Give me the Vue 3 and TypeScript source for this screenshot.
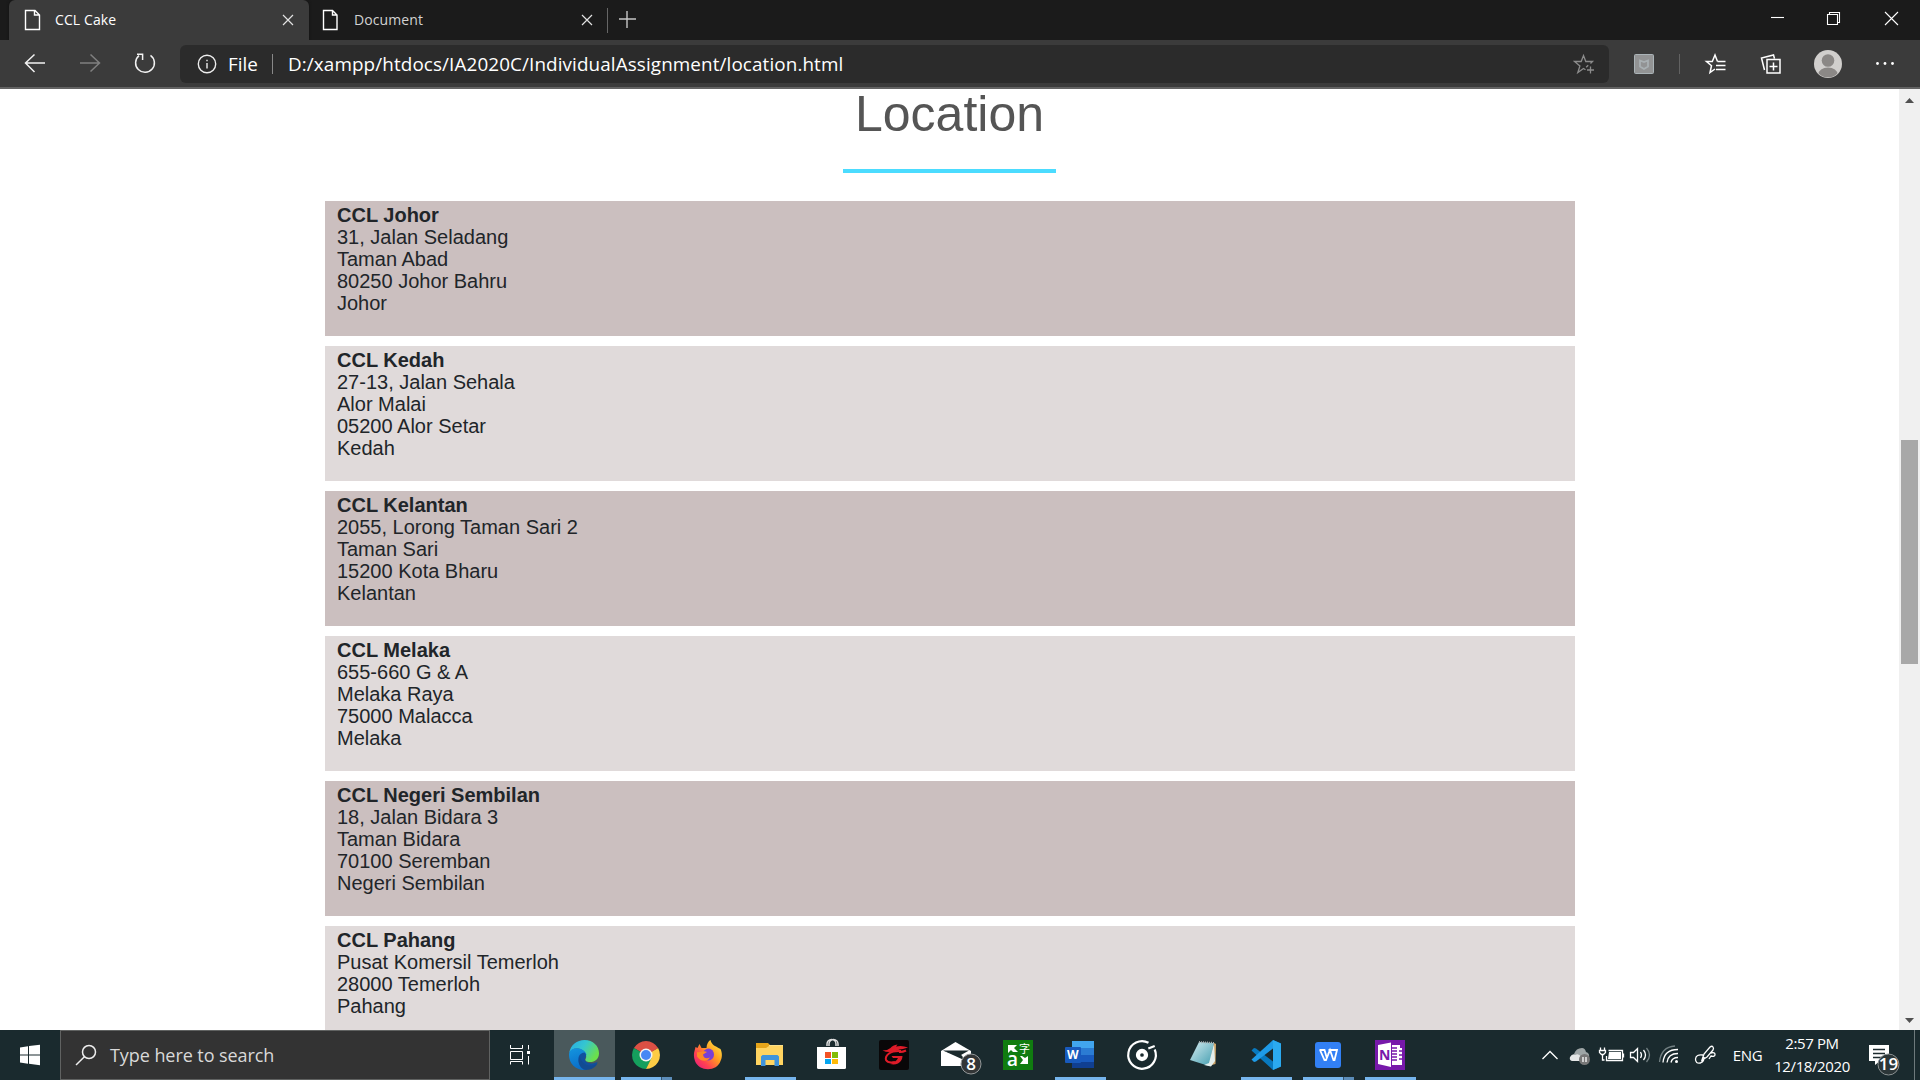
<script setup lang="ts">
interface Branch {
  name: string
  lines: string[]
}

interface TaskApp {
  id: string
  state?: 'active' | 'open' | 'multi'
}

const branches: Branch[] = [
  { name: 'CCL Johor', lines: ['31, Jalan Seladang', 'Taman Abad', '80250 Johor Bahru', 'Johor'] },
  { name: 'CCL Kedah', lines: ['27-13, Jalan Sehala', 'Alor Malai', '05200 Alor Setar', 'Kedah'] },
  { name: 'CCL Kelantan', lines: ['2055, Lorong Taman Sari 2', 'Taman Sari', '15200 Kota Bharu', 'Kelantan'] },
  { name: 'CCL Melaka', lines: ['655-660 G & A', 'Melaka Raya', '75000 Malacca', 'Melaka'] },
  { name: 'CCL Negeri Sembilan', lines: ['18, Jalan Bidara 3', 'Taman Bidara', '70100 Seremban', 'Negeri Sembilan'] },
  { name: 'CCL Pahang', lines: ['Pusat Komersil Temerloh', '28000 Temerloh', 'Pahang'] },
]

const apps: TaskApp[] = [
  { id: 'edge', state: 'active' },
  { id: 'chrome', state: 'multi' },
  { id: 'firefox' },
  { id: 'explorer', state: 'open' },
  { id: 'store' },
  { id: 'garena' },
  { id: 'mail' },
  { id: 'translator' },
  { id: 'word', state: 'open' },
  { id: 'groove' },
  { id: 'notepad' },
  { id: 'vscode', state: 'open' },
  { id: 'wps', state: 'multi' },
  { id: 'onenote', state: 'open' },
]
</script>

<template>
  <div class="screen">
    <header class="tabstrip">
      <div class="tab active">
        <svg class="page-icon" width="18" height="22" viewBox="0 0 18 22"><path d="M2.500 1.500h9.500l4.500 4.500v14.500h-14zM11.500 1.500v4.500h4.500" /></svg>
        <span class="tab-title t1">CCL Cake</span>
        <svg class="x" width="12" height="12" viewBox="0 0 12 12"><path d="M1 1l10 10M11 1L1 11" /></svg>
      </div>
      <div class="tab second">
        <svg class="page-icon" width="18" height="22" viewBox="0 0 18 22"><path d="M1.500 1.500h9l4.500 4.500v14.500h-13.500zM10.500 1.500v4.500h4.500" /></svg>
        <span class="tab-title t2">Document</span>
        <svg class="x" width="12" height="12" viewBox="0 0 12 12"><path d="M1 1l10 10M11 1L1 11" /></svg>
      </div>
      <i class="tab-sep"></i>
      <svg class="plus" width="17" height="17" viewBox="0 0 17 17"><path d="M8 0v17M0 8h17" /></svg>
      <div class="win-controls">
        <svg width="58" height="40" viewBox="0 0 58 40"><path d="M24 17.500h13" /></svg>
        <svg width="58" height="40" viewBox="0 0 58 40"><path d="M22.500 14.500h10v10h-10zM24.500 14.500v-2h10v10h-2" /></svg>
        <svg width="57" height="40" viewBox="0 0 57 40"><path d="M22 12l13 13M35 12L22 25" /></svg>
      </div>
    </header>

    <div class="toolbar">
      <svg class="nav" width="180" height="47" viewBox="0 0 180 47">
        <path d="M45 23H26M34.500 14.500L25.500 23l9 9" />
        <path class="dim" d="M80 23h19M90.500 14.500l9 8.500l-9 8.500" />
        <path d="M139 15.700A9.400 9.400 0 1 0 150.500 15.300M142.600 20V14.200H137" />
      </svg>
      <div class="address">
        <svg class="info" width="20" height="20" viewBox="0 0 20 20"><circle cx="10" cy="10" r="8.700" /><path d="M10 9v5.500M10 5.700v1.500" /></svg>
        <span class="scheme">File</span>
        <i class="addr-sep"></i>
        <span class="url">D:/xampp/htdocs/IA2020C/IndividualAssignment/location.html</span>
        <svg class="fav" width="22" height="22" viewBox="0 0 22 22"><path d="M17.500 10.500L19.500 8.500H12.800L10.500 2.500L8.200 8.500H1.500l5.400 4.500L4.800 19.500l5.700-4l2 1.200M13.200 14.200l2-2M17.500 13.500v7M14 17h7" /></svg>
      </div>
      <svg class="tools" width="311" height="47" viewBox="0 0 311 47">
        <rect x="25.500" y="14.500" width="19" height="19" rx="1" fill="#929394" stroke="#aab3b7" />
        <path d="M31 20.500l4 1.500l4-1.500v6l-4 2.500l-4-2.500z" fill="none" stroke="#a9b0b3" stroke-width="1.800" />
        <path d="M70.500 14v20" stroke="#626262" />
        <g class="line">
          <path d="M108.500 21.500L106 15l-2.700 6.500H97.500l5 4.200L101 32.500l5-3.500M108.500 21.500h8M107 25.500h9.500M107 29.500h9.500" />
          <path d="M158 19.500h13v13.500h-13zM164.500 22.500v8M160.500 26.500h8M155.500 30L152.500 18l12-3l1 3.500" />
        </g>
        <circle cx="219" cy="24" r="14" fill="#d1cfcd" />
        <clipPath id="avatarClip"><circle cx="219" cy="24" r="13.300" /></clipPath>
        <circle cx="219" cy="20.500" r="6.300" fill="#8b8886" />
        <ellipse cx="219" cy="34.500" rx="9.700" ry="7" fill="#8b8886" clip-path="url(#avatarClip)" />
        <g fill="#fff"><circle cx="268.500" cy="23.500" r="1.400" /><circle cx="276" cy="23.500" r="1.400" /><circle cx="283.500" cy="23.500" r="1.400" /></g>
      </svg>
    </div>

    <main class="viewport">
      <div class="page">
        <h1>Location</h1>
        <hr />
        <section class="branches">
          <article v-for="branch in branches" :key="branch.name" class="branch">
            <strong>{{ branch.name }}</strong>
            <span v-for="line in branch.lines" :key="line">{{ line }}</span>
          </article>
        </section>
      </div>
      <aside class="scrollbar">
        <svg width="21" height="21" viewBox="0 0 21 21"><path d="M6 14l4.500-5l4.500 5z" /></svg>
        <div class="track"><div class="thumb"></div></div>
        <svg width="21" height="21" viewBox="0 0 21 21"><path d="M6 9l4.500 5l4.500-5z" /></svg>
      </aside>
    </main>

    <footer class="taskbar">
      <svg class="start" width="60" height="50" viewBox="0 0 60 50"><path d="M20 17.500l8-1.200v8.200h-8zM29 16.100l11-1.300v9.700H29zM20 25.500h8v8.200l-8-1.200zM29 25.500h11v9.700l-11-1.400z" fill="#fff" /></svg>
      <div class="search">
        <svg width="22" height="22" viewBox="0 0 22 22"><circle cx="14" cy="8" r="6.500" /><path d="M9.400 12.800L1 21" /></svg>
        <span class="search-text">Type here to search</span>
      </div>
      <svg class="taskview" width="63" height="50" viewBox="0 0 63 50"><path d="M20.500 15v3.500h12V15M20.500 21.500h12v8h-12zM20.500 34.500v-3h12v3M38.500 15v4.500M38.500 26v8.500" fill="none" stroke="#fff" /><path d="M37 21h3v3h-3z" fill="#fff" /></svg>

      <div class="apps">
        <div v-for="app in apps" :key="app.id" class="app" :class="app.state">
          <svg width="46" height="40" viewBox="0 0 46 40">
            <template v-if="app.id === 'edge'">
              <defs>
                <linearGradient id="edgeTop" x1="0" y1="0" x2="1" y2=".5"><stop offset="0" stop-color="#27a9e5" /><stop offset=".5" stop-color="#35c6d0" /><stop offset="1" stop-color="#6be04b" /></linearGradient>
                <linearGradient id="edgeSide" x1="0" y1="0" x2=".3" y2="1"><stop offset="0" stop-color="#1495df" /><stop offset="1" stop-color="#0b6fc9" /></linearGradient>
              </defs>
              <path d="M8.200 18C9.500 10 16 5 23.500 5C32 5 38 11 38 18.200C38 24 34 27 29 27C25.500 27 23.800 25.700 24.500 24.300C27 20 23 14.500 17 13.500C13 13 9.500 15 8.200 18z" fill="url(#edgeTop)" />
              <path d="M8 20C8 15 12 12.800 16.500 13.200C21.500 13.700 25 16.500 25.500 20C21 18 18.500 22 19 26C19.600 30.500 23 34 27 34.500C17 37 8 30 8 20z" fill="url(#edgeSide)" />
              <path d="M23.500 17.500C17 18 16 25 19 29.500C22.500 34.500 30 35.500 36 28.500C37 27 36 27 35 27.500C29 30 24.500 27 24 25C23.500 22 27 21 23.500 17.500z" fill="#104f9e" />
              <path d="M19 22C16 26 18 32 23 34.800C29 35.500 34 33 36.500 28.500C29 33 21 30 19 22z" fill="#124b92" />
            </template>
            <template v-else-if="app.id === 'chrome'">
              <path d="M23 20L10.900 13A14 14 0 0 1 35.100 13z" fill="#dc5044" />
              <path d="M23 20L10.900 13A14 14 0 0 0 23 34L29 23z" fill="#159f5d" />
              <path d="M23 20L35.100 13A14 14 0 0 1 23 34L28.500 23z" fill="#fdcc45" />
              <path d="M23 13h12.100L28 17z" fill="#dc5044" />
              <circle cx="23" cy="20" r="6.500" fill="#f3f3f3" /><circle cx="23" cy="20" r="5" fill="#4688f4" />
            </template>
            <template v-else-if="app.id === 'firefox'">
              <defs><linearGradient id="fox" x1="1" y1="0" x2="0" y2="1"><stop offset="0" stop-color="#fff44f" /><stop offset=".4" stop-color="#ff9f20" /><stop offset=".7" stop-color="#ff4052" /><stop offset="1" stop-color="#e31587" /></linearGradient></defs>
              <path d="M9.500 16l1-4l2 1l2-4l2 4h5c0-4 2-7 4-8c1 5 5 6 8 8l2 1c2 4 1.700 9 0 12C32 37 14 37 10 26C8.500 22 8.800 18 9.500 16z" fill="url(#fox)" />
              <ellipse cx="23.500" cy="19.500" rx="5.500" ry="6" fill="#7940d5" />
              <path d="M12 17c3 1 6-2 10 0l-4 2.500c0 3 3 5 7 3c-3 5-10 4-13-1z" fill="#ff8a25" />
            </template>
            <template v-else-if="app.id === 'explorer'">
              <path d="M9 8h12l2 2h13v20H9z" fill="#e6a51a" /><path d="M22 10h14v3H22z" fill="#fbe089" /><path d="M9 13h10l3-2h14v19H9z" fill="#ffd461" />
              <path d="M14 31V21.500l1.500-1.500h15l1.500 1.500V31h-4.500v-6h-9v6z" fill="#3f94dc" />
            </template>
            <template v-else-if="app.id === 'store'">
              <path d="M18 11V9a4.500 4.500 0 0 1 9 0v2M20 11V9a4.500 4.500 0 0 1 9 0v2" fill="none" stroke="#dedede" stroke-width="1.500" />
              <path d="M8 12h29v20.500q0 1.500-1.500 1.500h-26Q8 34 8 32.500z" fill="#fff" />
              <path d="M16 17h6v6h-6z" fill="#f35325" /><path d="M23 17h6v6h-6z" fill="#81bc06" /><path d="M16 24h6v5h-6z" fill="#05a6f0" /><path d="M23 24h6v5h-6z" fill="#ffba08" />
            </template>
            <template v-else-if="app.id === 'garena'">
              <rect x="8" y="5" width="30" height="30" rx="2" fill="#090708" />
              <path d="M11.500 15.500q5 0 8-2.500q2-3 7-3.500l-1.500 2q6-1.500 12 1l-5 1.500q-4 0-6 1.500q-8 3-14.500 0z" fill="#df1b28" />
              <path d="M30 16q-8-.5-12 2.500t-3 6.500q2 3.500 9 2M35 15.500q-4 2-7 1.500" fill="none" stroke="#df1b28" stroke-width="2" />
              <path d="M20.500 21h11q0 5-4.500 7.500q-3.500 1.500-8 .5q6-2 8-6h-5z" fill="#df1b28" />
            </template>
            <template v-else-if="app.id === 'mail'">
              <path d="M8 16L22.500 7L38 16v15H8z" fill="#fff" /><path d="M10 15.500h26l-8 4.500L31 23z" fill="#1a292c" /><path d="M10 15.500L31 25l-3-5z" fill="#1a292c" />
              <circle cx="38" cy="29" r="10" fill="#333637" stroke="#949899" /><text x="38" y="34.500" text-anchor="middle" class="badge-num">8</text>
            </template>
            <template v-else-if="app.id === 'translator'">
              <rect x="8" y="5" width="30" height="30" fill="#107c10" />
              <path d="M13 10h9l-3 3l4 4h-5l-2-2l-3 3zM33 29v-8l-3 2l-3-2h-2l3 4l-3 4z" fill="#fff" />
              <text x="12" y="31" class="latin">a</text><text x="24" y="18" class="han">字</text>
            </template>
            <template v-else-if="app.id === 'word'">
              <path d="M15 6h22v7H15z" fill="#41a5ee" /><path d="M15 13h22v7H15z" fill="#2b7cd3" /><path d="M15 20h22v7H15z" fill="#185abd" /><path d="M15 27h22v6H15z" fill="#103f91" />
              <rect x="8" y="12" width="16" height="16" rx="1" fill="#185abd" /><text x="15.700" y="24" text-anchor="middle" class="word-w">W</text>
            </template>
            <template v-else-if="app.id === 'groove'">
              <path d="M29.500 7.800A13.800 13.800 0 1 0 35.700 14.500M29.300 13.500L35.700 11" fill="none" stroke="#fff" stroke-width="2.200" />
              <circle cx="23" cy="20" r="4" fill="none" stroke="#fff" stroke-width="4.300" />
            </template>
            <template v-else-if="app.id === 'notepad'">
              <defs><linearGradient id="note" x1="0" y1="0" x2="1" y2="1"><stop stop-color="#d5edf1" /><stop offset="1" stop-color="#3f9bae" /></linearGradient></defs>
              <path d="M33 8l2 1l-.5 20L27 31z" fill="#d1a668" /><path d="M18 7l15 1l-5 23l-19-6z" fill="url(#note)" /><path d="M33 9l1 17l-4 5.500l-7-1.500l5-2z" fill="#e3eeed" /><path d="M18 7l15 1" stroke="#a9afb0" stroke-dasharray="1 1" stroke-width="2" />
            </template>
            <template v-else-if="app.id === 'vscode'">
              <path d="M30 5l8 3.500v23L30 35L8.500 15.500L11 13l2 .5l17 13z" fill="#0879bf" /><path d="M30 13.500L13 26.500L11 27l-2.500-2.500L30 5z" fill="#1e9be8" /><path d="M30 5l8 3.500v23L30 35z" fill="#2baaf0" />
            </template>
            <template v-else-if="app.id === 'wps'">
              <rect x="10" y="7" width="26" height="26" rx="3" fill="#3280f5" /><path d="M14.500 15h5l2.500 8.500M15 15l4.500 10h1.500L25 15l3.500 10h1L32 15h-8.500M25 15l-2 4.500" fill="none" stroke="#fff" stroke-width="1.800" />
            </template>
            <template v-else>
              <rect x="8" y="5" width="30" height="30" fill="#7719aa" /><path d="M11 10l13-2.500v24.500l-13-3z" fill="#fff" /><path d="M25 10h8v3h2v17h-10z" fill="#fff" /><path d="M25 13h5M25 16h5M25 19h5M25 22h5M25 25h5M32 16h3M32 20h3M32 24h3" stroke="#7719aa" stroke-width="1.400" />
              <text x="17.700" y="25" text-anchor="middle" class="note-n">N</text>
            </template>
          </svg>
          <i class="underline"></i>
        </div>
      </div>

      <div class="tray">
        <svg width="30" height="50" viewBox="0 0 30 50"><path d="M7.500 29l7.500-7.500l7.500 7.500" /></svg>
        <svg width="30" height="50" viewBox="0 0 30 50"><path class="cloud-back" d="M7 30q-3-5 2-6q2-6 8-6q3 0 4 4q4 1 3 6l-3 2z" /><path class="cloud-front" d="M7 31q-3-1-2-4q2-3 5-2q4-2 6 2l5 4z" /><circle class="sync" cx="19.500" cy="29.500" r="5.500" /><path d="M18 27v5M21 27v5" /></svg>
        <svg width="30" height="50" viewBox="0 0 30 50"><path d="M13.500 20.500h14v10h-16v-4.500M28.500 23.500v4M5.500 17.500v3M9.500 17.500v3M4.500 20.500h6v2l-2 2h-2l-2-2zM7.500 25v5h2" /><path class="solid" d="M14 22h12v7H13z" /></svg>
        <svg width="30" height="50" viewBox="0 0 30 50"><path d="M5.500 22.500h3l4-4v13l-4-4h-3zM15.500 22q2 3 0 6M18.500 20q4 5 0 10" /><path d="M21.500 18q6 7 0 14" class="faint" /></svg>
        <svg width="30" height="50" viewBox="0 0 30 50"><path d="M8 32.500Q9 19.500 23 19.500M12 32.500Q13 23.500 23 23.500M16 32.500Q17 27.500 23 27.500" /><circle cx="21.500" cy="31.500" r="1.500" fill="#fff" /><path d="M4.500 32Q6 17 20 16" class="faint" /></svg>
        <svg width="40" height="50" viewBox="0 0 40 50"><path d="M17 30l2-6l6-7q2-1.500 3 0t0 3l-6 7zM18 25q-7-1-7.500 4q0 5 5 4q4-2 3.500-6M26 23q4-1 4 1.500t-4 1.500l-2 3" /></svg>
        <span class="lang">ENG</span>
        <div class="clock"><span class="time">2:57 PM</span><span class="date">12/18/2020</span></div>
        <svg class="notif" width="60" height="50" viewBox="0 0 60 50">
          <path class="solid" d="M15 15h20v16h-9l-5 4v-4h-6z" /><path class="note-lines" d="M19 19.500h12M19 23.500h12M19 27.500h8" />
          <circle cx="34.500" cy="34.500" r="10.500" fill="#2c3638" stroke="#8b9192" /><text x="34.500" y="40" text-anchor="middle" class="badge-num">19</text>
        </svg>
        <i class="desktop-edge"></i>
      </div>
    </footer>
  </div>
</template>

<style>
body { margin: 0; overflow: hidden; }
</style>

<style scoped>
* { box-sizing: border-box; }
svg { display: block; flex: none; }
.screen { width: 1920px; height: 1080px; display: flex; flex-direction: column; overflow: hidden; background: #fff; font-family: "Open Sans", "Noto Sans", sans-serif; }
.tabstrip { height: 40px; flex: none; display: flex; background: #1b1b1b; padding-left: 9px; }
.tab { display: flex; align-items: center; width: 300px; height: 40px; padding: 0 15px 0 14px; }
.tab.active { background: #3b3b3b; border-radius: 6px 6px 0 0; box-shadow: 0 0 3px #111; }
.tab.second { width: 298px; padding: 0 14px 0 13px; }
.page-icon path { fill: none; stroke: #fff; stroke-width: 1.4; }
.tab-title { color: #fff; font-size: 14px; line-height: 20px; margin-left: 14px; white-space: nowrap; }
.t2 { color: #d2d2d2; letter-spacing: .1px; }
.t1 { letter-spacing: .1px; }
.x { margin-left: auto; }
.x path { stroke: #e2e2e2; stroke-width: 1.2; }
.tab-sep { width: 1px; height: 25px; margin: 8px 11px 0 0; background: #666; }
.plus { margin-top: 11px; }
.plus path { stroke: #c5c5c5; stroke-width: 1.4; }
.win-controls { display: flex; margin-left: auto; }
.win-controls path { fill: none; stroke: #fff; stroke-width: 1.1; }
.toolbar { height: 49px; flex: none; display: flex; background: #3b3b3b; border-bottom: 2px solid #636363; }
.nav path { fill: none; stroke: #f2f2f2; stroke-width: 1.5; }
.nav .dim { stroke: #808080; }
.address { width: 1429px; height: 38px; margin-top: 5px; background: #2b2b2b; border-radius: 6px; display: flex; align-items: center; padding: 0 14px 0 17px; color: #fff; font-size: 18.85px; line-height: 24px; }
.info { fill: none; stroke: #eee; stroke-width: 1.4; }
.scheme { width: 44px; margin-left: 11px; }
.addr-sep { width: 1px; height: 20px; background: #888; margin-right: 15px; }
.url { white-space: nowrap; letter-spacing: .11px; }
.fav { margin-left: auto; }
.fav path { fill: none; stroke: #8c8c8c; stroke-width: 1.3; }
.tools .line path { fill: none; stroke: #fff; stroke-width: 1.5; }
.viewport { height: 941px; flex: none; display: flex; background: #fff; overflow: hidden; }
.page { width: 1899px; font-family: "Liberation Sans", Arial, sans-serif; display: flex; flex-direction: column; align-items: center; }
h1 { margin: 0; height: 80px; flex: none; font-size: 50px; line-height: 50px; font-weight: 400; color: #555; }
hr { width: 213px; height: 4px; flex: none; margin: 0 0 28px; border: 0; background: #4bdcff; }
.branches { width: 1250px; flex: none; display: flex; flex-direction: column; gap: 10px; }
.branch { height: 135px; flex: none; padding: 3px 12.5px; display: flex; flex-direction: column; font-size: 20px; line-height: 22px; color: #212529; background: #cbbfbf; }
.branch:nth-child(even) { background: #e0dada; }
.scrollbar { width: 21px; background: #f0f0f0; display: flex; flex-direction: column; }
.scrollbar path { fill: #505050; }
.track { flex: 1; padding: 330px 2px 0; }
.thumb { height: 224px; background: #a8a8a8; }
.taskbar { height: 50px; flex: none; display: flex; background: #1a2a2e; color: #fff; }
.search { width: 430px; border: 1px solid #606261; background: #333; display: flex; align-items: center; padding-left: 14px; }
.search svg { fill: none; stroke: #eee; stroke-width: 1.5; }
.search-text { margin-left: 13px; color: #d9d9d9; font-size: 18px; line-height: 24px; letter-spacing: -.07px; white-space: nowrap; }
.apps { display: flex; }
.app { width: 62px; height: 50px; display: flex; flex-direction: column; align-items: center; padding-top: 5px; }
.app svg { overflow: visible; }
.app.active { background: linear-gradient(90deg, transparent 1px, #4a595c 1px); }
.underline { display: none; width: 51px; height: 3px; margin-top: 2px; background: #76b5ed; }
.open .underline, .multi .underline, .active .underline { display: block; }
.active .underline { width: 61px; margin-left: 1px; }
.multi .underline { background: linear-gradient(90deg, #76b5ed 40px, #35536c 40px, #35536c 41px, #5c8db9 41px); }
.badge-num { font: 600 17px "Open Sans", sans-serif; fill: #fff; }
.latin { font: 600 19px "Open Sans", sans-serif; fill: #fff; }
.han { font: 11px "Noto Sans CJK SC", sans-serif; fill: #fff; }
.word-w { font: 700 12px "Open Sans", sans-serif; fill: #fff; }
.note-n { font: 700 14px "Open Sans", sans-serif; fill: #7719aa; }
.tray { margin-left: auto; display: flex; align-items: center; }
.tray path { stroke: #fff; stroke-width: 1.3; fill: none; }
.tray .solid { fill: #fff; stroke: none; }
.tray .cloud-back { fill: #9ea5a6; stroke: none; }
.tray .cloud-front { fill: #e4e6e6; stroke: none; }
.tray .sync { fill: #777; }
.tray .faint { stroke: #738083; }
.tray .note-lines { stroke: #1d2b2f; }
.lang { width: 45px; text-align: center; font-size: 15px; letter-spacing: -.3px; }
.clock { width: 84px; display: flex; flex-direction: column; align-items: center; font-size: 15px; line-height: 23px; letter-spacing: -.4px; white-space: nowrap; }
.desktop-edge { width: 1px; height: 50px; margin-right: 5px; background: #6e797c; }
</style>
